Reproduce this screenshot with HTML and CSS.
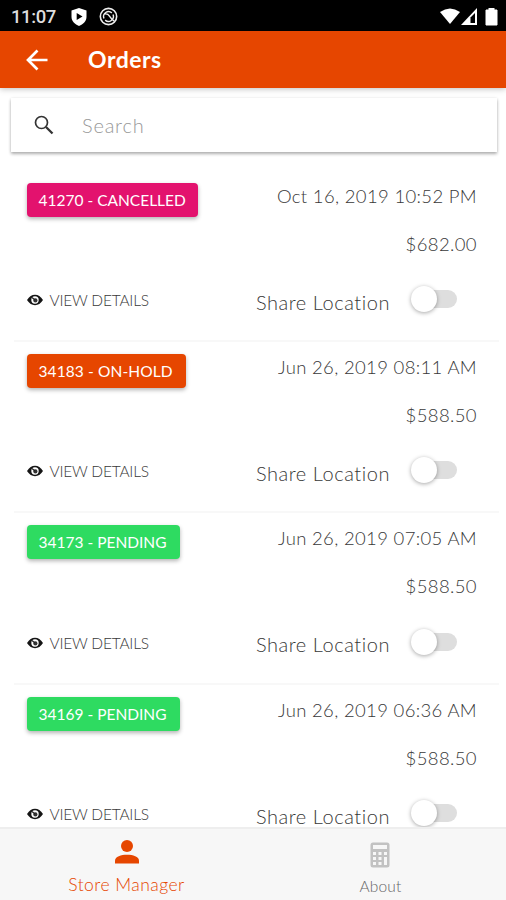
FILE: index.html
```html
<!DOCTYPE html>
<html lang="en">
<head>
<meta charset="utf-8">
<title>Orders</title>
<link rel="stylesheet" href="styles.css">
</head>
<body>
<svg class="defs" width="0" height="0">
  <symbol id="eye" viewBox="0 0 16 12"><path d="M0 6Q3.400 .8 8 .8T16 6Q12.600 11.200 8 11.200T0 6Z" fill="#151515"/><circle cx="8" cy="6" r="3.700" fill="#fff"/><circle cx="8.400" cy="6.400" r="2.100" fill="#333"/><path d="M5 3.500L8 6" stroke="#222" stroke-width="1.200"/></symbol>
</svg>
<div class="app">
  <div class="status">
    <span class="time">11:07</span>
    <svg class="shield" viewBox="0 0 16 18"><path d="M8 0L15.500 2.500V9C15.500 13 12 16.500 8 18C4 16.500.5 13 .5 9V2.500Z" fill="#fff"/><path d="M5.700 5V12L11.500 8.500Z" fill="#000"/></svg>
    <svg class="sync" viewBox="0 0 20 20" fill="none" stroke="#eee"><circle cx="10" cy="10" r="8.600" stroke-width="1.700"/><path d="M5.200 12A5.200 5.200 0 0 1 13.500 6.200M14.800 8A5.200 5.200 0 0 1 6.500 13.800M5.500 7.500Q9 6.500 11 9.500T16 15" stroke-width="1.500"/></svg>
    <svg class="signals" viewBox="0 0 60 18"><path d="M0 4Q10-3 20 4L10 16Z" fill="#fff"/><path d="M21 17L37 0V17Z" fill="#fff"/><path d="M30.500 9.500L35 5V15H30.500Z" fill="#000"/><path d="M49 0H54V2H57V17H46V2H49Z" fill="#fff" stroke="#fff" stroke-linejoin="round"/></svg>
  </div>
  <header class="bar">
    <svg class="back" viewBox="0 0 22 22" fill="none" stroke="#fff" stroke-width="2.700"><path d="M21.500 11H2M11.500 1.500L2 11L11.500 20.500"/></svg>
    <h1>Orders</h1>
  </header>
  <main>
    <div class="search">
      <svg viewBox="0 0 20 20" fill="none" stroke="#333"><circle cx="7.500" cy="7.500" r="6" stroke-width="1.700"/><path d="M12 12L18.500 18.500" stroke-width="2.300"/></svg>
      <span>Search</span>
    </div>
    <div class="orders">
      <article class="order">
        <span class="badge cancelled">41270 - CANCELLED</span><time>Oct 16, 2019 10:52 PM</time>
        <span class="price">$682.00</span>
        <a class="view"><svg><use href="#eye"/></svg><span>VIEW DETAILS</span></a>
        <div class="share"><span>Share Location</span><i class="toggle"></i></div>
      </article>
      <article class="order">
        <span class="badge hold">34183 - ON-HOLD</span><time>Jun 26, 2019 08:11 AM</time>
        <span class="price">$588.50</span>
        <a class="view"><svg><use href="#eye"/></svg><span>VIEW DETAILS</span></a>
        <div class="share"><span>Share Location</span><i class="toggle"></i></div>
      </article>
      <article class="order">
        <span class="badge pending">34173 - PENDING</span><time>Jun 26, 2019 07:05 AM</time>
        <span class="price">$588.50</span>
        <a class="view"><svg><use href="#eye"/></svg><span>VIEW DETAILS</span></a>
        <div class="share"><span>Share Location</span><i class="toggle"></i></div>
      </article>
      <article class="order">
        <span class="badge pending">34169 - PENDING</span><time>Jun 26, 2019 06:36 AM</time>
        <span class="price">$588.50</span>
        <a class="view"><svg><use href="#eye"/></svg><span>VIEW DETAILS</span></a>
        <div class="share"><span>Share Location</span><i class="toggle"></i></div>
      </article>
    </div>
  </main>
  <nav class="tabs">
    <a class="tab active"><svg class="person" viewBox="0 0 24 24" fill="#e64600"><circle cx="12" cy="6" r="6"/><path d="M0 23.500V20.500C0 16.500 6 14.700 12 14.700S24 16.500 24 20.500V23.500Z"/></svg><span>Store Manager</span></a>
    <a class="tab about"><svg class="calc" viewBox="0 0 20 26"><rect x=".5" y=".5" width="19" height="25" rx="2.500" fill="#c2c2c2"/><g fill="#f7f7f7"><rect x="3" y="3" width="14" height="4"/><rect x="3" y="10" width="3" height="3"/><rect x="8.500" y="10" width="3" height="3"/><rect x="14" y="10" width="3" height="3"/><rect x="3" y="15" width="3" height="3"/><rect x="8.500" y="15" width="3" height="3"/><rect x="3" y="20" width="3" height="3"/><rect x="8.500" y="20" width="3" height="3"/><rect x="14" y="15" width="3" height="8"/></g></svg><span>About</span></a>
  </nav>
</div>
</body>
</html>
```
FILE: styles.css
```css
* { box-sizing: border-box; }
body { margin: 0; background: #fff; font-family: Lato, "Liberation Sans", sans-serif; color: #383838; }
.defs { display: block; height: 0; }
.app { width: 506px; height: 900px; display: flex; flex-direction: column; overflow: hidden; }
span, time, h1 { white-space: nowrap; }
.status { height: 31px; flex: none; background: #000; display: flex; align-items: center; padding: 2px 8px 0 11px; }
.time { font: 500 18.500px/24px Roboto, sans-serif; color: #ddd; width: 60px; letter-spacing: -.4px; }
.shield { width: 16px; height: 18px; }
.sync { width: 19px; height: 19px; margin-left: 12px; }
.signals { width: 60px; height: 18px; margin-left: auto; margin-right: -2px; }
.bar { height: 57px; flex: none; background: #e64600; display: flex; align-items: center; padding-left: 26px; box-shadow: 0 1px 6px rgba(0,0,0,.25); position: relative; }
.back { width: 22px; height: 22px; }
h1 { margin: -2px 0 0 40px; font-size: 23px; line-height: 28px; font-weight: 700; color: #fff; letter-spacing: .5px; }
main { flex: 1; min-height: 0; overflow: hidden; }
.search { height: 54px; margin: 10px 9px 0 11px; padding-left: 23px; display: flex; align-items: center; box-shadow: 0 2px 3px rgba(0,0,0,.3), 0 0 3px rgba(0,0,0,.08); }
.search svg { width: 20px; height: 20px; }
.search span { margin-left: 28px; font-size: 20px; color: #999; font-weight: 300; letter-spacing: .8px; }
.orders { padding: 18.500px 7px 0 14px; }
.order { height: 171.400px; display: grid; grid-template-columns: 210px 1fr; grid-template-rows: 49px 49.500px 1fr; padding: 12px 22px 0 12.500px; border-bottom: 2px solid #f8f8f8; }
.badge { justify-self: start; height: 34px; padding: 0 12px; font-size: 15.500px; line-height: 34px; color: #fff; border-radius: 4px; box-shadow: 0 2px 4px rgba(0,0,0,.3); }
.cancelled { background: #e3126e; width: 171px; }
.hold { background: #e64600; width: 159px; letter-spacing: .1px; }
.pending { background: #2edb61; width: 153px; }
time { justify-self: end; font-size: 18.500px; line-height: 27px; font-weight: 300; letter-spacing: .34px; }
.price { grid-column: 2; justify-self: end; align-self: start; font-size: 18.500px; line-height: 24px; font-weight: 300; letter-spacing: .4px; }
.view { display: flex; align-items: center; height: 38px; }
.view svg { width: 16px; height: 12px; }
.view span { margin-left: 7px; font-size: 15.500px; font-weight: 300; letter-spacing: -.2px; }
.share { display: flex; justify-content: space-between; height: 42px; align-items: center; margin-left: 19.500px; margin-right: 20px; }
.share span { font-size: 20px; font-weight: 300; letter-spacing: .55px; margin-top: -1px; }
.toggle { width: 43px; height: 18px; border-radius: 9px; background: #dedede; display: flex; align-items: center; margin-top: -6px; }
.toggle::before { content: ""; width: 26px; height: 26px; border-radius: 50%; background: #fff; box-shadow: 0 1px 4px rgba(0,0,0,.35); margin-left: -3px; }
.tabs { height: 73px; flex: none; display: flex; background: #f7f7f7; border-top: 2px solid #eee; }
.tab { width: 50%; display: flex; flex-direction: column; align-items: center; }
.tab span { font-size: 17.500px; font-weight: 300; line-height: 24px; letter-spacing: .45px; }
.active { color: #e64600; }
.about { color: #666; }
.about span { font-size: 15.500px; letter-spacing: .2px; margin-left: 2px; line-height: 26px; }
.person { width: 24px; height: 24px; margin: 11px 0 9px; }
.calc { width: 20px; height: 26px; margin: 13px 0 5px 1px; }
```
